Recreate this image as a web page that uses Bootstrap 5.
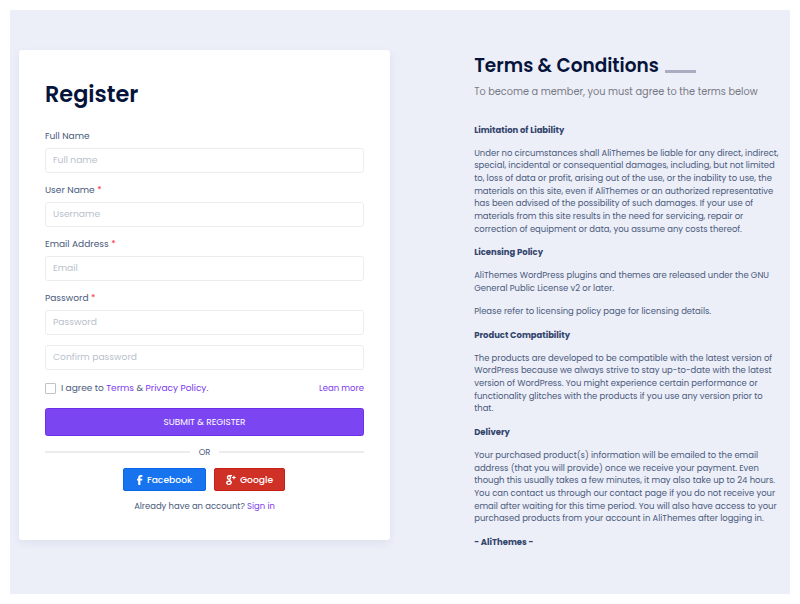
<!DOCTYPE html>
<html lang="en">
<head>
<meta charset="utf-8">
<meta name="viewport" content="width=device-width, initial-scale=1">
<title>Register</title>
<link href="https://cdn.jsdelivr.net/npm/bootstrap@5.3.0/dist/css/bootstrap.min.css" rel="stylesheet">
<style>
body{font-family:Poppins,Inter,"Open Sans",sans-serif;font-size:8.43px;line-height:12.65px;color:#4a5a7c;background:#fff;padding:10px}
a{color:#7c3aed;text-decoration:none}
.page-panel{background:#eceef8;height:584px;padding:40px 9px 0}
.signup-card{width:371px;height:490px;background:#fff;border:0;border-radius:3px;padding:26px;box-shadow:0 3px 9px rgba(60,72,130,.07)}
h1,h2{color:#06133a;font-weight:600;margin:0;white-space:nowrap}
h1{font-size:22.4px;line-height:36px;margin-bottom:16.5px}
.form-label{display:block;font-size:9.07px;line-height:13px;margin:0 0 6px}
.req{color:#f8333c}
.form-control{font-size:9.15px;line-height:13px;height:25px;padding:0 7px;border:1px solid #ededf0;border-radius:3px;color:#465677}
.form-control::placeholder{color:#b9bfcc;opacity:1}
.field{margin-bottom:10px}
.agree-row{height:13px;font-size:9.03px;margin:12px 0 13.5px}
.agree-row .form-check-input{width:11px;height:11px;margin:0;border:1px solid #bfc3cc;border-radius:1px}
.agree-box{gap:5px}
.lean{font-size:8.5px}
.btn-submit{height:27.5px;background:#7c45f2;border:1px solid #6c30e8;border-radius:2.5px;color:#fff;font-size:8.95px;line-height:1;padding:1px 0 0}
.or-row{height:13px;margin:10px 0 9.5px;gap:9px}
.or-line{height:2px;background:#ececee}
.social{gap:8px;margin-bottom:9px;padding-right:1px}
.social .btn{height:23px;font-size:9.2px;font-weight:500;line-height:1;color:#fff;padding:1px 0 0;border-radius:2px}
.btn-fb{width:83px;background:#1874ee;border:1px solid #0867e8}
.btn-gp{width:71px;background:#cf3126;border:1px solid #c62015}
.terms{margin-left:84.2px;padding-top:2px;white-space:nowrap}
h2{font-size:18.5px;line-height:28px}
.title-rule{width:31px;height:3px;background:#a9adbf;margin:18px 0 0 6.5px}
.intro{font-size:9.72px;line-height:15px;color:#777a84;margin:4px 0 24.5px}
.terms p{margin:0 0 10.63px}
.terms strong{font-weight:700;color:#33456b}
</style>
</head>
<body>
<main class="page-panel d-flex align-items-start">
  <section class="card signup-card flex-shrink-0">
    <h1>Register</h1>
    <form>
      <div class="field"><label class="form-label" for="fn">Full Name</label><input class="form-control" id="fn" placeholder="Full name"></div>
      <div class="field"><label class="form-label" for="un">User Name <span class="req">*</span></label><input class="form-control" id="un" placeholder="Username"></div>
      <div class="field"><label class="form-label" for="em">Email Address <span class="req">*</span></label><input class="form-control" id="em" type="email" placeholder="Email"></div>
      <div class="field"><label class="form-label" for="pw">Password <span class="req">*</span></label><input class="form-control" id="pw" type="password" placeholder="Password"></div>
      <input class="form-control" type="password" placeholder="Confirm password" aria-label="Confirm password">
      <div class="agree-row d-flex align-items-center justify-content-between">
        <div class="agree-box d-flex align-items-center"><input class="form-check-input" type="checkbox" id="ag"><label for="ag">I agree to <a href="#">Terms</a> &amp; <a href="#">Privacy Policy</a>.</label></div>
        <a href="#" class="lean">Lean more</a>
      </div>
      <button type="button" class="btn btn-submit w-100 d-flex align-items-center justify-content-center">SUBMIT &amp; REGISTER</button>
      <div class="or-row d-flex align-items-center"><span class="or-line flex-fill"></span><span>OR</span><span class="or-line flex-fill"></span></div>
      <div class="social d-flex justify-content-center">
        <button type="button" class="btn btn-fb d-flex align-items-center justify-content-center"><svg width="6" height="10" viewBox="0 0 6 10" fill="#fff" class="me-1"><path d="M1.2 10V5.600H0V3.700h1.200V2.600C1.200.9 2.200 0 3.800 0h1.600v1.800h-1c-.8 0-1 .3-1 .9v1H5.400L5.200 5.600H3.400V10z"/></svg><span>Facebook</span></button>
        <button type="button" class="btn btn-gp d-flex align-items-center justify-content-center"><svg width="10" height="10" viewBox="0 0 10 10" fill="none" stroke="#fff"><ellipse cx="3" cy="2.500" rx="1.500" ry="1.800" stroke-width="1.400"/><path d="M2.800.6H6M3.500 4.400C3 5.200 5.500 5.800 5.200 7.600 4.900 9.900.7 9.900.7 7.800.7 6.300 2.500 6 3.900 6" stroke-width="1.400"/><path d="M7.900.7v3.600M6.100 2.500h3.600" stroke-width="1.200"/></svg><span class="ms-1">Google</span></button>
      </div>
      <div class="text-center">Already have an account? <a href="#">Sign in</a></div>
    </form>
  </section>
  <section class="terms">
    <div class="d-flex"><h2>Terms &amp; Conditions</h2><span class="title-rule"></span></div>
    <div class="intro">To become a member, you must agree to the terms below</div>
    <p><strong>Limitation of Liability</strong></p>
    <p>Under no circumstances shall AliThemes be liable for any direct, indirect,<br>special, incidental or consequential damages, including, but not limited<br>to, loss of data or profit, arising out of the use, or the inability to use, the<br>materials on this site, even if AliThemes or an authorized representative<br>has been advised of the possibility of such damages. If your use of<br>materials from this site results in the need for servicing, repair or<br>correction of equipment or data, you assume any costs thereof.</p>
    <p><strong>Licensing Policy</strong></p>
    <p>AliThemes WordPress plugins and themes are released under the GNU<br>General Public License v2 or later.</p>
    <p>Please refer to licensing policy page for licensing details.</p>
    <p><strong>Product Compatibility</strong></p>
    <p>The products are developed to be compatible with the latest version of<br>WordPress because we always strive to stay up-to-date with the latest<br>version of WordPress. You might experience certain performance or<br>functionality glitches with the products if you use any version prior to<br>that.</p>
    <p><strong>Delivery</strong></p>
    <p>Your purchased product(s) information will be emailed to the email<br>address (that you will provide) once we receive your payment. Even<br>though this usually takes a few minutes, it may also take up to 24 hours.<br>You can contact us through our contact page if you do not receive your<br>email after waiting for this time period. You will also have access to your<br>purchased products from your account in AliThemes after logging in.</p>
    <p><strong>- AliThemes -</strong></p>
  </section>
</main>
<script src="https://cdn.jsdelivr.net/npm/bootstrap@5.3.0/dist/js/bootstrap.bundle.min.js"></script>
</body>
</html>
